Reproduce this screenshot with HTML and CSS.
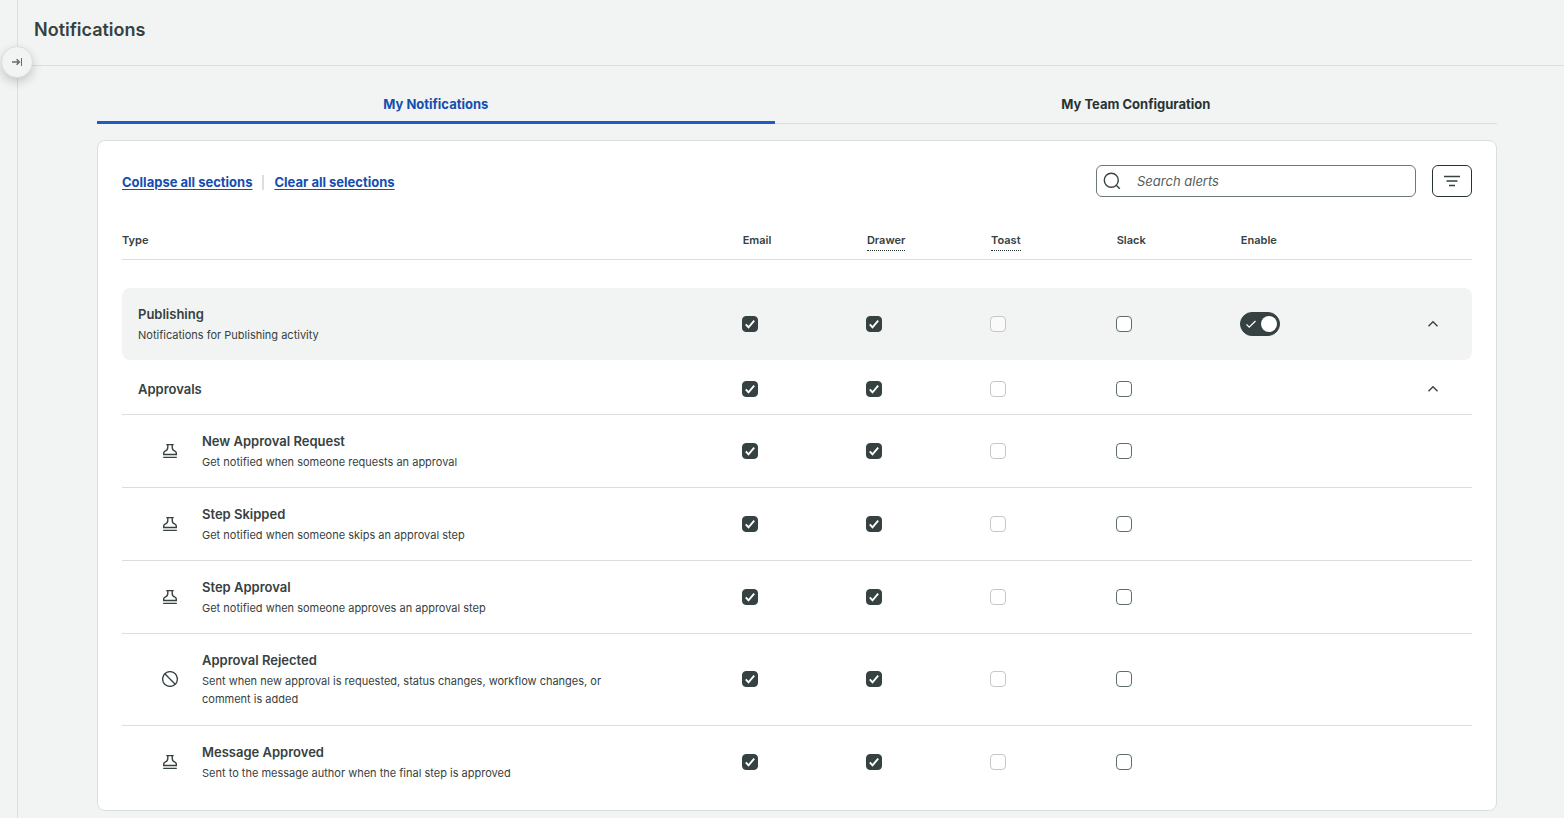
FILE: index.html
```html
<!DOCTYPE html>
<html lang="en">
<head>
<meta charset="utf-8">
<title>Notifications</title>
<link rel="stylesheet" href="styles.css">
</head>
<body>
<svg class="sprite" aria-hidden="true">
  <symbol id="stamp" viewBox="0 0 16 16"><path d="M4.3 1.6h7.4M5.8 1.6v2.6c0 2.2-.6 3-2.4 3.7-1.2.5-1.7 1.1-1.7 2.1v1.5h12.6V10c0-1-.5-1.6-1.7-2.1-1.8-.7-2.4-1.5-2.4-3.7V1.6M1.2 14.4h13.6" fill="none" stroke="currentColor" stroke-width="1.4"/></symbol>
  <symbol id="blocked" viewBox="0 0 16 16"><circle cx="8" cy="8" r="7.4" fill="none" stroke="currentColor" stroke-width="1.3"/><path d="M2.8 2.8l10.4 10.4" fill="none" stroke="currentColor" stroke-width="1.3"/></symbol>
  <symbol id="chevron" viewBox="0 0 16 16"><path d="M3.5 10.2L8 5.8l4.5 4.4" fill="none" stroke="currentColor" stroke-width="1.4"/></symbol>
</svg>
<div class="app">
  <aside class="rail">
    <button class="rail-toggle" type="button" aria-label="Expand sidebar">
      <svg viewBox="0 0 12 12" width="12" height="12" aria-hidden="true"><path d="M1 6h7.4M5.6 3.2L8.4 6 5.6 8.8" fill="none" stroke="currentColor" stroke-width="1.5"/><path d="M10.5 2v8" stroke="currentColor"/></svg>
    </button>
  </aside>
  <main class="main">
    <header class="page-header"><h1>Notifications</h1></header>
    <div class="content">
      <div class="tabs" role="tablist">
        <button class="tab tab-active" type="button" role="tab" aria-selected="true">My Notifications</button>
        <button class="tab" type="button" role="tab" aria-selected="false">My Team Configuration</button>
      </div>
      <section class="card">
        <div class="toolbar">
          <div class="links">
            <a href="#">Collapse all sections</a>
            <span class="divider"></span>
            <a href="#">Clear all selections</a>
          </div>
          <div class="tools">
            <div class="search">
              <svg viewBox="0 0 18 18" width="18" height="18" aria-hidden="true"><circle cx="8.3" cy="8.3" r="7" fill="none" stroke="currentColor" stroke-width="1.4"/><path d="M13.2 13.2l3.6 3.6" stroke="currentColor" stroke-width="1.4"/></svg>
              <input type="text" placeholder="Search alerts" aria-label="Search alerts">
            </div>
            <button class="filter" type="button" aria-label="Filter">
              <svg viewBox="0 0 16 12" width="16" height="12" aria-hidden="true"><path d="M0 1.5h16M2.5 6h11M5 10.5h6" stroke="currentColor" stroke-width="1.3"/></svg>
            </button>
          </div>
        </div>
        <table class="alerts">
          <colgroup><col><col class="c-channel"><col class="c-channel"><col class="c-toast"><col class="c-channel"><col class="c-channel"><col class="c-expand"></colgroup>
          <thead>
            <tr><th scope="col">Type</th><th scope="col">Email</th><th scope="col"><span class="hint">Drawer</span></th><th scope="col"><span class="hint">Toast</span></th><th scope="col">Slack</th><th scope="col">Enable</th><th></th></tr>
          </thead>
          <tbody>
            <tr class="section">
              <td><div class="name">Publishing</div><div class="desc">Notifications for Publishing activity</div></td>
              <td><input type="checkbox" aria-label="Publishing email" checked></td>
              <td><input type="checkbox" aria-label="Publishing drawer" checked></td>
              <td><input type="checkbox" aria-label="Publishing toast" disabled></td>
              <td><input type="checkbox" aria-label="Publishing Slack"></td>
              <td><input class="switch" type="checkbox" role="switch" aria-label="Enable Publishing" checked></td>
              <td><button class="expand" type="button" aria-label="Collapse Publishing"><svg width="16" height="16"><use href="#chevron"/></svg></button></td>
            </tr>
            <tr class="group">
              <td><div class="name">Approvals</div></td>
              <td><input type="checkbox" aria-label="Approvals email" checked></td>
              <td><input type="checkbox" aria-label="Approvals drawer" checked></td>
              <td><input type="checkbox" aria-label="Approvals toast" disabled></td>
              <td><input type="checkbox" aria-label="Approvals Slack"></td>
              <td></td>
              <td><button class="expand" type="button" aria-label="Collapse Approvals"><svg width="16" height="16"><use href="#chevron"/></svg></button></td>
            </tr>
            <tr class="item">
              <td><div class="alert"><svg width="16" height="16"><use href="#stamp"/></svg><div><div class="name">New Approval Request</div><div class="desc">Get notified when someone requests an approval</div></div></div></td>
              <td><input type="checkbox" aria-label="New Approval Request email" checked></td>
              <td><input type="checkbox" aria-label="New Approval Request drawer" checked></td>
              <td><input type="checkbox" aria-label="New Approval Request toast" disabled></td>
              <td><input type="checkbox" aria-label="New Approval Request Slack"></td>
              <td></td><td></td>
            </tr>
            <tr class="item">
              <td><div class="alert"><svg width="16" height="16"><use href="#stamp"/></svg><div><div class="name">Step Skipped</div><div class="desc">Get notified when someone skips an approval step</div></div></div></td>
              <td><input type="checkbox" aria-label="Step Skipped email" checked></td>
              <td><input type="checkbox" aria-label="Step Skipped drawer" checked></td>
              <td><input type="checkbox" aria-label="Step Skipped toast" disabled></td>
              <td><input type="checkbox" aria-label="Step Skipped Slack"></td>
              <td></td><td></td>
            </tr>
            <tr class="item">
              <td><div class="alert"><svg width="16" height="16"><use href="#stamp"/></svg><div><div class="name">Step Approval</div><div class="desc">Get notified when someone approves an approval step</div></div></div></td>
              <td><input type="checkbox" aria-label="Step Approval email" checked></td>
              <td><input type="checkbox" aria-label="Step Approval drawer" checked></td>
              <td><input type="checkbox" aria-label="Step Approval toast" disabled></td>
              <td><input type="checkbox" aria-label="Step Approval Slack"></td>
              <td></td><td></td>
            </tr>
            <tr class="item item-tall">
              <td><div class="alert"><svg width="16" height="16"><use href="#blocked"/></svg><div><div class="name">Approval Rejected</div><div class="desc">Sent when new approval is requested, status changes, workflow changes, or comment is added</div></div></div></td>
              <td><input type="checkbox" aria-label="Approval Rejected email" checked></td>
              <td><input type="checkbox" aria-label="Approval Rejected drawer" checked></td>
              <td><input type="checkbox" aria-label="Approval Rejected toast" disabled></td>
              <td><input type="checkbox" aria-label="Approval Rejected Slack"></td>
              <td></td><td></td>
            </tr>
            <tr class="item">
              <td><div class="alert"><svg width="16" height="16"><use href="#stamp"/></svg><div><div class="name">Message Approved</div><div class="desc">Sent to the message author when the final step is approved</div></div></div></td>
              <td><input type="checkbox" aria-label="Message Approved email" checked></td>
              <td><input type="checkbox" aria-label="Message Approved drawer" checked></td>
              <td><input type="checkbox" aria-label="Message Approved toast" disabled></td>
              <td><input type="checkbox" aria-label="Message Approved Slack"></td>
              <td></td><td></td>
            </tr>
          </tbody>
        </table>
      </section>
    </div>
  </main>
</div>
</body>
</html>
```

FILE: styles.css
```css
* { box-sizing: border-box; }

body {
  margin: 0;
  background: #f2f4f3;
  color: #364141;
  font-family: Inter, "Liberation Sans", sans-serif;
  font-size: 13px;
  line-height: 20px;
}

button, input { font: inherit; color: inherit; margin: 0; }

.sprite { display: none; }

.app { display: flex; min-height: 100vh; }

.rail {
  position: relative;
  flex: none;
  width: 18px;
  border-right: 1px solid #dadedd;
}

.rail-toggle {
  position: absolute;
  z-index: 1;
  top: 46px;
  left: 1px;
  display: grid;
  place-items: center;
  width: 32px;
  height: 32px;
  padding: 0;
  border: 1px solid #dadedd;
  border-radius: 50%;
  background: #f2f4f3;
  color: #5f6e6d;
  box-shadow: 0 4px 10px rgba(39, 51, 51, 0.22);
}

.main { flex: 1; min-width: 0; }

.page-header {
  padding: 18px 16px 23px;
  border-bottom: 1px solid #dadedd;
}

h1 { margin: 0; font-size: 18px; line-height: 24px; font-weight: 600; }

.content { padding: 18px 67px 7px 79px; }

.tabs {
  display: grid;
  grid-template-columns: 48.4% 1fr;
  margin-bottom: 16px;
}

.tab {
  height: 40px;
  padding: 0;
  border: 0;
  border-bottom: 1px solid #dadedd;
  background: none;
  color: #273333;
  font-weight: 700;
}

.tab-active {
  padding-top: 2px;
  border-bottom: 3px solid #205bc3;
  color: #144eb0;
}

.card {
  padding: 24px 24px 11px;
  border: 1px solid #dadedd;
  border-radius: 8px;
  background: #fff;
}

.toolbar { display: flex; justify-content: space-between; align-items: center; }

.links { display: flex; align-items: center; gap: 10px; padding-top: 2px; }

.links a {
  color: #144eb0;
  font-weight: 700;
  text-decoration: underline;
  text-underline-offset: 2px;
}

.divider { width: 2px; height: 15px; background: #dadedd; }

.tools { display: flex; gap: 16px; }

.search {
  display: flex;
  align-items: center;
  gap: 16px;
  width: 320px;
  height: 32px;
  padding: 0 6px;
  border: 1px solid #6b7978;
  border-radius: 6px;
}

.search input {
  flex: 1;
  min-width: 0;
  padding: 0;
  border: 0;
  outline: 0;
  background: none;
}

.search input::placeholder { color: #515e5f; font-style: italic; opacity: 1; }

.filter {
  display: grid;
  place-items: center;
  width: 40px;
  height: 32px;
  padding: 0;
  border: 1px solid #273333;
  border-radius: 6px;
  background: #fff;
}

.alerts {
  width: 100%;
  margin-top: 24px;
  border-collapse: separate;
  border-spacing: 0;
  table-layout: fixed;
}

.c-channel { width: 9.2%; }
.c-toast { width: 9.3%; }
.c-expand { width: 8%; }

th {
  height: 39px;
  padding: 0 0 0 1px;
  border-bottom: 1px solid #dadedd;
  font-size: 11px;
  font-weight: 600;
  text-align: left;
}

th:first-child { padding-left: 0; }

.hint { padding-bottom: 3px; border-bottom: 1px dotted #273333; }

tbody::before { content: ""; display: block; height: 28px; }

td { padding: 0; vertical-align: middle; }

.section td { height: 72px; background: #f2f4f3; }
.section td:first-child { padding-left: 16px; border-radius: 8px 0 0 8px; }
.section td:last-child { border-radius: 0 8px 8px 0; }

.group td { height: 55px; padding-top: 4px; border-bottom: 1px solid #dadedd; }
.group td:first-child { padding-left: 16px; }

.item td { height: 73px; border-bottom: 1px solid #dadedd; }
.item-tall td { height: 92px; padding-bottom: 1px; }
.item:last-child td { border-bottom-color: transparent; }

.alert { display: flex; align-items: center; gap: 24px; padding-left: 40px; }
.alert svg { flex: none; }

.name { font-weight: 600; }
.desc { max-width: 416px; margin-top: 2px; font-size: 11px; line-height: 18px; }

input[type="checkbox"] {
  appearance: none;
  display: block;
  width: 16px;
  height: 16px;
  border: 1px solid #5f6e6d;
  border-radius: 4px;
  background: #fff;
}

input[type="checkbox"]:disabled { border-color: #c3c9c8; background: #fafafa; }
.group input:disabled, .item input[type="checkbox"]:disabled { background: #fff; }

input[type="checkbox"]:checked {
  border-color: #364141;
  background: #364141 url("data:image/svg+xml,%3Csvg xmlns='http://www.w3.org/2000/svg' viewBox='0 0 14 14'%3E%3Cpath d='M2.8 7.4l2.7 2.9 5.7-6.6' fill='none' stroke='white' stroke-width='1.9'/%3E%3C/svg%3E") center / 14px 14px no-repeat;
}

input[type="checkbox"].switch {
  display: flex;
  align-items: center;
  justify-content: flex-end;
  width: 40px;
  height: 24px;
  padding: 0 2px;
  border-radius: 12px;
  background-position: 3px center;
  background-size: 14px 14px;
  background-image: url("data:image/svg+xml,%3Csvg xmlns='http://www.w3.org/2000/svg' viewBox='0 0 14 14'%3E%3Cpath d='M2.5 7.4l2.7 2.7 6.3-6.1' fill='none' stroke='white' stroke-width='1.3'/%3E%3C/svg%3E");
}

.switch::after { content: ""; width: 16px; height: 16px; border-radius: 50%; background: #fff; }

.expand {
  display: grid;
  place-items: center;
  width: 24px;
  height: 24px;
  margin: 0 27px 0 auto;
  padding: 0;
  border: 0;
  background: none;
}
```
